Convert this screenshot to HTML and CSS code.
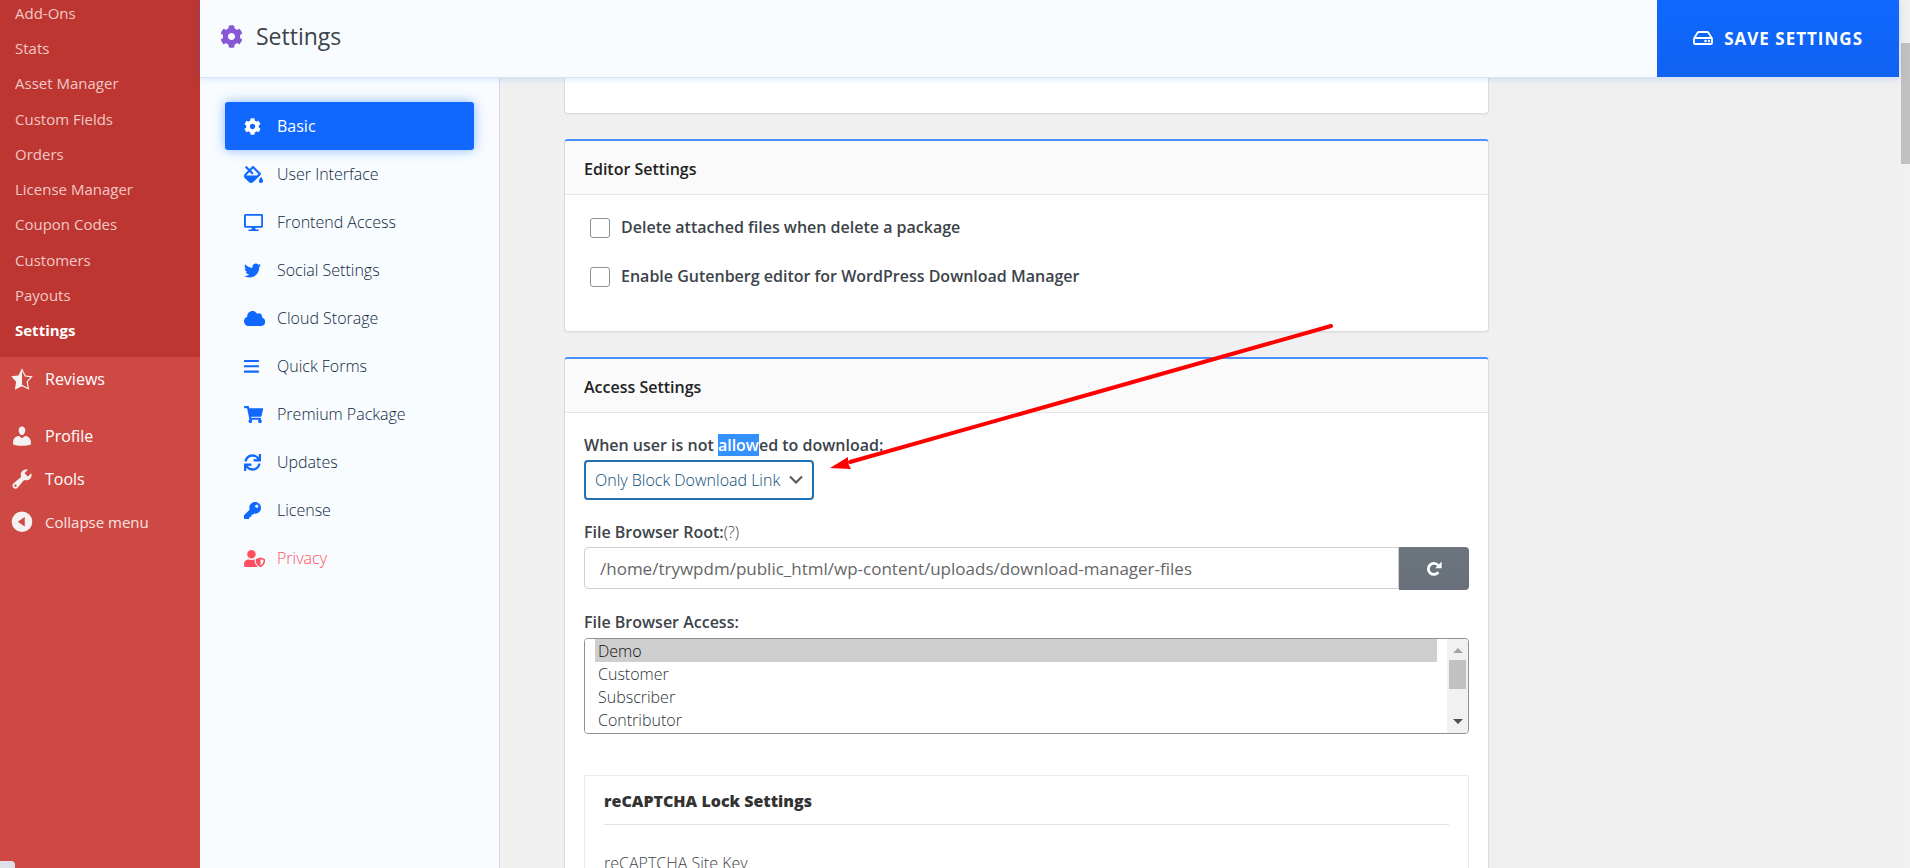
FILE: index.html
```html
<!DOCTYPE html>
<html lang="en">
<head>
  <meta charset="UTF-8" />
  <meta name="viewport" content="width=device-width, initial-scale=1.0"/>
  <title>Settings - Download Manager</title>
  <link rel="stylesheet" href="styles.css">
</head>
<body>

  <nav class="admin-menu">
    <ul class="submenu">
      <li><a href="#">Add-Ons</a></li>
      <li><a href="#">Stats</a></li>
      <li><a href="#">Asset Manager</a></li>
      <li><a href="#">Custom Fields</a></li>
      <li><a href="#">Orders</a></li>
      <li><a href="#">License Manager</a></li>
      <li><a href="#">Coupon Codes</a></li>
      <li><a href="#">Customers</a></li>
      <li><a href="#">Payouts</a></li>
      <li><a href="#" class="current">Settings</a></li>
    </ul>
    <ul class="top-menu">
      <li class="group-end"><a href="#">
        <svg class="dashicon" viewBox="0 0 20 20"><path d="M10 1L7 7l-6 .75 4.13 4.62L4 19l6-3 6 3-1.13-6.63L19 7.75 13 7zm0 2.24l2.34 4.69 4.65.58-3.18 3.56.87 5.15L10 14.88V3.24z"/></svg>
        Reviews</a></li>
      <li><a href="#">
        <svg class="dashicon" viewBox="0 0 20 20"><path d="M10 9.25c-2.27 0-2.73-3.44-2.73-3.44C7 4.02 7.82 2 9.97 2c2.16 0 2.98 2.02 2.71 3.81 0 0-.41 3.44-2.68 3.44zM10 11.800L12.500 10c2.600 0 4.900 2.300 4.900 4.600v2.400s-3.650 1.130-7.400 1.130c-3.750 0-7.400-1.130-7.400-1.130v-2.400C2.600 12.300 4.900 10 7.500 10z"/></svg>
        Profile</a></li>
      <li><a href="#">
        <svg class="dashicon" viewBox="0 0 20 20"><path d="M16.68 9.77c-1.34 1.34-3.3 1.67-4.95.99l-5.41 6.52c-.99.99-2.59.99-3.58 0s-.99-2.59 0-3.57l6.52-5.42c-.68-1.65-.35-3.61.99-4.95 1.28-1.28 3.12-1.62 4.72-1.06l-2.89 2.89 2.82 2.82 2.86-2.87c.53 1.58.18 3.39-1.08 4.65zM3.81 16.21c.4.39 1.04.39 1.43 0 .4-.4.4-1.04 0-1.43-.39-.4-1.03-.4-1.43 0-.39.39-.39 1.03 0 1.43z"/></svg>
        Tools</a></li>
    </ul>
    <button class="collapse" type="button">
      <svg class="dashicon" viewBox="0 0 20 20"><path fill-rule="evenodd" d="M10 1.200a8.600 8.600 0 1 1 0 17.200a8.600 8.600 0 1 1 0-17.200zM12.300 5.800L6.500 9.800l5.800 4z"/></svg>
      Collapse menu
    </button>
    <div class="status-chip"></div>
  </nav>

  <div class="main">
    <header class="header">
      <h1>
        <svg class="cog" viewBox="0 0 512 512"><path d="M487.400 315.700l-42.600-24.600c4.300-23.200 4.300-47 0-70.200l42.600-24.600c4.900-2.800 7.100-8.600 5.500-14-11.100-35.600-30-67.800-54.700-94.600-3.800-4.100-10-5.100-14.800-2.300L380.800 110c-17.900-15.400-38.500-27.300-60.800-35.100V25.800c0-5.600-3.900-10.500-9.400-11.700-36.700-8.200-74.300-7.800-109.200 0-5.500 1.200-9.400 6.100-9.400 11.700V75c-22.200 7.900-42.800 19.800-60.800 35.100L88.700 85.500c-4.900-2.800-11-1.900-14.800 2.300-24.700 26.700-43.600 58.900-54.700 94.600-1.700 5.400.6 11.200 5.500 14L67.300 221c-4.300 23.200-4.300 47 0 70.200l-42.600 24.600c-4.900 2.800-7.100 8.600-5.500 14 11.100 35.600 30 67.800 54.700 94.600 3.800 4.100 10 5.100 14.800 2.300l42.600-24.600c17.900 15.400 38.500 27.300 60.800 35.100v49.200c0 5.600 3.900 10.500 9.400 11.700 36.700 8.200 74.300 7.800 109.200 0 5.500-1.200 9.400-6.100 9.400-11.700v-49.200c22.200-7.900 42.800-19.800 60.800-35.100l42.600 24.600c4.900 2.800 11 1.900 14.800-2.300 24.700-26.700 43.600-58.900 54.700-94.600 1.500-5.500-.7-11.300-5.600-14.100zM256 336c-44.100 0-80-35.900-80-80s35.900-80 80-80 80 35.900 80 80-35.900 80-80 80z"/></svg>
        Settings
      </h1>
      <button class="save" type="submit" form="wpdm-settings">
        <svg viewBox="0 0 20 14"><path d="M1 7.500L4.500 1.800Q5 1 6 1h8q1 0 1.500.8L19 7.500V12q0 1-1 1H2q-1 0-1-1V8q0-1 1-1h16q1 0 1 1" fill="none" stroke="currentColor" stroke-width="1.800"/><circle cx="12.500" cy="10" r="1.300"/><circle cx="16" cy="10" r="1.300"/></svg>
        SAVE SETTINGS
      </button>
    </header>

    <div class="columns">
      <ul class="tabs">
        <li><a href="#" class="active"><svg viewBox="0 0 512 512"><path d="M487.400 315.700l-42.600-24.600c4.300-23.200 4.300-47 0-70.200l42.600-24.600c4.900-2.800 7.100-8.600 5.500-14-11.100-35.600-30-67.800-54.700-94.600-3.800-4.100-10-5.100-14.800-2.300L380.800 110c-17.900-15.400-38.500-27.300-60.800-35.100V25.800c0-5.600-3.900-10.500-9.400-11.700-36.700-8.200-74.300-7.800-109.200 0-5.500 1.200-9.400 6.100-9.400 11.700V75c-22.200 7.900-42.800 19.800-60.800 35.100L88.700 85.500c-4.900-2.800-11-1.900-14.800 2.300-24.700 26.700-43.600 58.900-54.700 94.600-1.700 5.400.6 11.200 5.500 14L67.300 221c-4.300 23.200-4.300 47 0 70.200l-42.600 24.600c-4.900 2.800-7.100 8.600-5.500 14 11.100 35.600 30 67.800 54.700 94.600 3.800 4.100 10 5.100 14.800 2.300l42.600-24.600c17.900 15.400 38.500 27.300 60.800 35.100v49.200c0 5.600 3.900 10.500 9.400 11.700 36.700 8.200 74.300 7.800 109.200 0 5.500-1.200 9.400-6.100 9.400-11.700v-49.200c22.200-7.900 42.800-19.800 60.800-35.100l42.600 24.600c4.900 2.800 11 1.900 14.800-2.300 24.700-26.700 43.600-58.900 54.700-94.600 1.500-5.500-.7-11.300-5.600-14.100zM256 336c-44.100 0-80-35.900-80-80s35.900-80 80-80 80 35.900 80 80-35.900 80-80 80z"/></svg>Basic</a></li>
        <li><a href="#"><svg viewBox="0 0 576 512"><path d="M512 320s-64 92.650-64 128c0 35.350 28.660 64 64 64s64-28.650 64-64-64-128-64-128zm-9.370-102.940L294.940 9.370C288.690 3.120 280.500 0 272.310 0s-16.380 3.120-22.620 9.370l-81.580 81.580L81.930 4.760c-6.250-6.250-16.380-6.250-22.620 0L36.690 27.380c-6.240 6.250-6.240 16.380 0 22.620l86.190 86.180-94.760 94.760c-37.490 37.480-37.490 98.260 0 135.750l117.190 117.190c18.740 18.740 43.310 28.120 67.870 28.120 24.570 0 49.130-9.370 67.870-28.120l221.570-221.570c12.500-12.500 12.500-32.750.01-45.250zm-116.220 70.970H65.930c1.360-3.840 3.570-7.980 7.430-11.830l13.150-13.150 81.610-81.610 58.600 58.600c12.490 12.490 32.750 12.490 45.240 0s12.490-32.750 0-45.240l-58.600-58.600 58.950-58.950 162.440 162.440-48.340 48.340z"/></svg>User Interface</a></li>
        <li><a href="#"><svg viewBox="0 0 576 512"><path d="M528 0H48C21.500 0 0 21.500 0 48v320c0 26.500 21.500 48 48 48h192l-16 48h-72c-13.300 0-24 10.700-24 24s10.700 24 24 24h272c13.300 0 24-10.700 24-24s-10.700-24-24-24h-72l-16-48h192c26.500 0 48-21.500 48-48V48c0-26.500-21.500-48-48-48zm-10 362H58V54h460v308z"/></svg>Frontend Access</a></li>
        <li><a href="#"><svg viewBox="0 0 512 512"><path d="M459.370 151.716c.325 4.548.325 9.097.325 13.645 0 138.720-105.583 298.558-298.558 298.558-59.452 0-114.680-17.219-161.137-47.106 8.447.974 16.568 1.299 25.340 1.299 49.055 0 94.213-16.568 130.274-44.832-46.132-.975-84.792-31.188-98.112-72.772 6.498.974 12.995 1.624 19.818 1.624 9.421 0 18.843-1.300 27.614-3.573-48.081-9.747-84.143-51.980-84.143-102.985v-1.299c13.969 7.797 30.214 12.670 47.431 13.319-28.264-18.843-46.781-51.005-46.781-87.391 0-19.492 5.197-37.360 14.294-52.954 51.655 63.675 129.300 105.258 216.365 109.807-1.624-7.797-2.599-15.918-2.599-24.040 0-57.828 46.782-104.934 104.934-104.934 30.213 0 57.502 12.670 76.670 33.137 23.715-4.548 46.456-13.320 66.599-25.340-7.798 24.366-24.366 44.833-46.132 57.827 21.117-2.273 41.584-8.122 60.426-16.243-14.292 20.791-32.161 39.308-52.628 54.253z"/></svg>Social Settings</a></li>
        <li><a href="#"><svg viewBox="0 0 640 512"><path d="M537.600 226.600c4.100-10.700 6.400-22.400 6.400-34.600 0-53-43-96-96-96-19.700 0-38.100 6-53.300 16.200C367 64.200 315.300 32 256 32c-88.400 0-160 71.600-160 160 0 2.700.1 5.400.2 8.100C40.200 219.800 0 273.200 0 336c0 79.500 64.500 144 144 144h368c70.700 0 128-57.300 128-128 0-61.900-44-113.600-102.400-125.400z"/></svg>Cloud Storage</a></li>
        <li><a href="#"><svg viewBox="0 0 448 512"><path d="M0 68q0-10 10-10h428q10 0 10 10v44q0 10-10 10H10q-10 0-10-10zM0 228q0-10 10-10h428q10 0 10 10v44q0 10-10 10H10q-10 0-10-10zM0 388q0-10 10-10h428q10 0 10 10v44q0 10-10 10H10q-10 0-10-10z"/></svg>Quick Forms</a></li>
        <li><a href="#"><svg viewBox="0 0 576 512"><path d="M528.120 301.319l47.273-208C578.806 78.301 567.391 64 551.990 64H159.208l-9.166-44.810C147.758 8.021 137.930 0 126.529 0H24C10.745 0 0 10.745 0 24v16c0 13.255 10.745 24 24 24h69.883l70.248 343.435C147.325 417.100 136 435.222 136 456c0 30.928 25.072 56 56 56s56-25.072 56-56c0-15.674-6.447-29.835-16.824-40h209.647C430.447 426.165 424 440.326 424 456c0 30.928 25.072 56 56 56s56-25.072 56-56c0-22.172-12.888-41.332-31.579-50.405l5.517-24.276c3.413-15.018-8.002-29.319-23.403-29.319H218.117l-6.545-32h293.145c11.206 0 20.920-7.754 23.403-18.681z"/></svg>Premium Package</a></li>
        <li><a href="#"><svg viewBox="0 0 512 512"><path d="M440.650 12.570l4 82.770A247.160 247.160 0 0 0 255.830 8C134.730 8 33.910 94.920 12.290 209.820A12 12 0 0 0 24.090 224h49.050a12 12 0 0 0 11.670-9.260 175.910 175.910 0 0 1 317-56.940l-101.460-4.860a12 12 0 0 0-12.570 12v47.410a12 12 0 0 0 12 12H500a12 12 0 0 0 12-12V12a12 12 0 0 0-12-12h-47.370a12 12 0 0 0-11.980 12.570zM255.830 432a175.610 175.610 0 0 1-146-77.800l101.800 4.870a12 12 0 0 0 12.570-12v-47.400a12 12 0 0 0-12-12H12a12 12 0 0 0-12 12V500a12 12 0 0 0 12 12h47.350a12 12 0 0 0 12-12.600l-4.150-82.570A247.170 247.170 0 0 0 255.830 504c121.110 0 221.930-86.920 243.550-201.820a12 12 0 0 0-11.800-14.180h-49.050a12 12 0 0 0-11.670 9.260A175.860 175.860 0 0 1 255.830 432z"/></svg>Updates</a></li>
        <li><a href="#"><svg viewBox="0 0 512 512"><path d="M512 176.001C512 273.203 433.202 352 336 352c-11.220 0-22.190-1.062-32.827-3.069l-24.012 27.014A23.999 23.999 0 0 1 261.223 384H224v40c0 13.255-10.745 24-24 24h-40v40c0 13.255-10.745 24-24 24H24c-13.255 0-24-10.745-24-24v-78.059c0-6.365 2.529-12.470 7.029-16.971l161.802-161.802C163.108 213.814 160 195.271 160 176 160 78.798 238.797.001 335.999 0 433.488-.001 512 78.511 512 176.001zM336 128c0 26.510 21.490 48 48 48s48-21.490 48-48-21.490-48-48-48-48 21.490-48 48z"/></svg>License</a></li>
        <li><a href="#" class="danger"><svg viewBox="0 0 640 512"><path d="M622.300 271.100l-115.200-45c-4.100-1.600-12.600-3.700-22.200 0l-115.200 45c-10.700 4.200-17.700 14-17.700 24.900 0 111.600 68.700 188.800 132.900 213.900 9.600 3.700 18 1.600 22.200 0C558.400 489.900 640 420.500 640 296c0-10.900-7-20.700-17.700-24.900zM496 462.400V273.300l95.500 37.300c-5.600 87.100-60.900 135.400-95.500 151.800zM224 256c70.700 0 128-57.300 128-128S294.700 0 224 0 96 57.300 96 128s57.300 128 128 128zm96 40c0-2.500.8-4.800 1.100-7.200-2.500-.1-4.900-.8-7.500-.8h-16.700c-22.200 10.200-46.900 16-72.900 16s-50.600-5.800-72.900-16h-16.700C60.200 288 0 348.200 0 422.400V464c0 26.500 21.500 48 48 48h352c6.800 0 13.300-1.500 19.200-4-54-42.900-99.200-116.700-99.200-212z"/></svg>Privacy</a></li>
      </ul>

      <form class="content" id="wpdm-settings">
        <section class="panel panel-scrolled"></section>

        <section class="panel">
          <h2 class="panel-heading">Editor Settings</h2>
          <div class="panel-body checks">
            <label class="check"><input type="checkbox">Delete attached files when delete a package</label>
            <label class="check"><input type="checkbox">Enable Gutenberg editor for WordPress Download Manager</label>
          </div>
        </section>

        <section class="panel">
          <h2 class="panel-heading">Access Settings</h2>
          <div class="panel-body">
            <div class="form-group">
              <label for="restrict">When user is not <span class="selected">allow</span>ed to download:</label>
              <select class="dropdown" id="restrict">
                <option>Only Block Download Link</option>
                <option>Hide Everything</option>
              </select>
            </div>

            <div class="form-group">
              <div><label for="root">File Browser Root:</label><span class="help" title="Root dir for server file browser">(?)</span></div>
              <div class="input-group">
                <input type="text" id="root" value="/home/trywpdm/public_html/wp-content/uploads/download-manager-files">
                <button type="button" aria-label="Reset">
                  <svg viewBox="0 0 16 16"><path d="M12.300 11.200A5.500 5.500 0 1 1 12 4.300" fill="none" stroke="currentColor" stroke-width="2.800"/><path d="M15.600.6v6.100q0 .6-.6.6H9.200z"/></svg>
                </button>
              </div>
            </div>

            <div class="form-group">
              <label for="access">File Browser Access:</label>
              <div class="listbox">
                <select id="access" multiple size="4">
                  <option selected>Demo</option>
                  <option>Customer</option>
                  <option>Subscriber</option>
                  <option>Contributor</option>
                  <option>Author</option>
                  <option>Editor</option>
                  <option>Administrator</option>
                </select>
                <div class="list-scroll">
                  <span class="arrow-up"></span>
                  <span class="list-thumb"></span>
                  <span class="arrow-down"></span>
                </div>
              </div>
            </div>

            <fieldset class="recaptcha">
              <h3>reCAPTCHA Lock Settings</h3>
              <label for="sitekey">reCAPTCHA Site Key</label>
              <input type="text" id="sitekey">
            </fieldset>
          </div>
        </section>

        <!-- pointer to the dropdown -->
        <svg class="pointer" viewBox="0 0 504 146"><path d="M20 138L501 2" stroke="#f00" stroke-width="4" stroke-linecap="round"/><path d="M0 144L18 133V139L21 145z" fill="#f00"/></svg>
      </form>
    </div>
  </div>

  <div class="page-scroll"><div class="page-thumb"></div></div>

</body>
</html>
```
FILE: styles.css
```css
* { box-sizing: border-box; margin: 0; padding: 0; }
body {
  display: flex;
  height: 100vh;
  overflow: hidden;
  font-family: "Open Sans", "Noto Sans", sans-serif;
  font-size: 16px;
  background: #f0f0f0;
  color: #3c434a;
}
ul { list-style: none; }
a { text-decoration: none; }
svg { fill: currentColor; flex-shrink: 0; }
button, input, select { font-family: inherit; font-size: 16px; }

/* admin menu */
.admin-menu {
  position: relative;
  width: 200px;
  flex-shrink: 0;
  background: #cf4944;
}
.submenu {
  display: grid;
  grid-auto-rows: 1fr;
  height: 362px;
  margin-top: -5px;
  padding-bottom: 9px;
  background: #be3631;
}
.submenu a {
  display: flex;
  align-items: center;
  height: 100%;
  padding-left: 15px;
  font-size: 15px;
  color: #f1c8c7;
}
.submenu a.current { color: #fff; font-weight: 700; }

.top-menu a, .collapse {
  display: flex;
  align-items: center;
  gap: 11px;
  height: 43px;
  padding-left: 10px;
  color: #fff;
}
.group-end { margin-bottom: 14px; }
.dashicon { width: 24px; height: 24px; color: #f3f1f1; }
.collapse {
  background: none;
  border: 0;
  font-size: 15px;
  color: #f7e3e3;
  cursor: pointer;
}
.status-chip {
  position: absolute;
  left: 0;
  bottom: 0;
  width: 15px;
  height: 7px;
  background: #dee1e6;
  border-top-right-radius: 4px;
}

/* header */
.main {
  display: flex;
  flex-direction: column;
  flex: 1;
  min-width: 0;
}
.header {
  position: relative;
  z-index: 2;
  display: flex;
  justify-content: space-between;
  height: 78px;
  flex-shrink: 0;
  background: #f8fcff;
  border-bottom: 1px solid #d9e4f2;
  box-shadow: 0 0 8px #1068ff33;
}
.header h1 {
  display: flex;
  align-items: center;
  gap: 13px;
  padding: 0 0 5px 20px;
  font-size: 23px;
  font-weight: 500;
}
.cog { width: 23px; height: 23px; color: #8757d5; }
.save {
  display: flex;
  align-items: center;
  gap: 11px;
  padding: 0 36px 1px;
  border: 0;
  background: linear-gradient(#0f68ff, #1062f2);
  color: #fff;
  font-size: 17px;
  font-weight: 700;
  letter-spacing: 1px;
  cursor: pointer;
}
.save svg { width: 20px; height: 14px; }

/* tabs */
.columns {
  display: flex;
  flex: 1;
  min-height: 0;
}
.tabs {
  width: 300px;
  flex-shrink: 0;
  padding: 24px 25px;
  background: #f8fcff;
  border-right: 1px solid #d3dbe8;
  display: grid;
  grid-auto-rows: 48px;
  align-content: start;
}
.tabs a {
  display: grid;
  grid-template-columns: 33px 1fr;
  align-items: center;
  height: 48px;
  padding-left: 19px;
  border-radius: 3px;
  font-weight: 300;
  color: #10283f;
}
.tabs svg { height: 17px; color: #1068ff; }
.tabs a.active {
  background: #1068ff;
  color: #fff;
  font-weight: 400;
  box-shadow: 0 0 12px #1068ff77;
}
.tabs a.active svg { color: #fff; }
.tabs a.danger, .tabs a.danger svg { color: #ff5062; }

/* content */
.content {
  position: relative;
  flex: 1;
  min-width: 0;
  padding-left: 64px;
  overflow: hidden;
}
.panel {
  max-width: 925px;
  margin-bottom: 25px;
  background: #fff;
  border: 1px solid #dcdcdc;
  border-top: 2px solid #4a90ff;
  border-radius: 4px;
  box-shadow: 0 1px 2px #0000000d;
}
.panel-scrolled {
  height: 36px;
  border-top: 0;
  border-radius: 0 0 4px 4px;
}
.panel-heading {
  padding: 16px 19px 13px;
  background: #fafafa;
  border-bottom: 1px solid #e3e4e5;
  border-radius: 3px 3px 0 0;
  font-size: 16px;
  line-height: 24px;
  font-weight: 600;
  color: #222;
}
.panel-body { padding: 20px 19px; }
.panel-body label { font-weight: 600; line-height: 24px; }

.checks {
  display: flex;
  flex-direction: column;
  gap: 25px;
  padding: 20px 25px 43px;
}
.check { display: flex; gap: 11px; }
.check input {
  appearance: none;
  width: 20px;
  height: 20px;
  margin-top: 3px;
  background: #fff;
  border: 1px solid #8c8f94;
  border-radius: 3px;
}

.form-group { margin-bottom: 20px; }
.form-group label { vertical-align: top; }
.selected { background: #3390ff; color: #fff; }
.dropdown {
  display: block;
  appearance: none;
  height: 40px;
  margin-top: 3px;
  padding: 0 31px 0 9px;
  border: 2px solid #2271b1;
  border-radius: 4px;
  background: #fff url("data:image/svg+xml,%3Csvg xmlns='http://www.w3.org/2000/svg' viewBox='0 0 14 10'%3E%3Cpath d='M1 1.500l6 6 6-6' fill='none' stroke='%23555' stroke-width='2'/%3E%3C/svg%3E") no-repeat right 9px center / 14px 10px;
  font-weight: 300;
  color: #0a4b78;
}
.help { line-height: 24px; font-weight: 300; }

.input-group { display: flex; margin-top: 3px; }
.input-group input {
  flex: 1;
  min-width: 0;
  height: 42px;
  padding: 0 15px;
  border: 1px solid #cdcfd2;
  border-radius: 4px 0 0 4px;
  font-size: 17px;
  color: #666;
}
.input-group button {
  display: flex;
  align-items: center;
  justify-content: center;
  width: 70px;
  height: 43px;
  border: 0;
  border-radius: 0 4px 4px 0;
  background: linear-gradient(#6c757d, #686f7a);
  color: #fff;
}
.input-group button svg { width: 16px; height: 16px; }

.listbox {
  display: flex;
  margin-top: 4px;
  height: 96px;
  border: 1px solid #8c8f94;
  border-radius: 4px;
  overflow: hidden;
}
.listbox select {
  flex: 1;
  min-width: 0;
  padding: 0 10px;
  border: 0;
  scrollbar-width: none;
  color: #2c3338;
}
.listbox option {
  height: 23px;
  padding: 1px 3px 0;
  font-weight: 300;
  line-height: 23px;
}
.list-scroll {
  display: flex;
  flex-direction: column;
  align-items: center;
  width: 21px;
  padding: 9px 0;
  background: #f1f1f1;
}
.arrow-up {
  border: 5px solid transparent;
  border-top: 0;
  border-bottom-color: #a3a3a3;
}
.list-thumb {
  width: 17px;
  height: 29px;
  margin: 7px 0 auto;
  background: #c1c1c1;
}
.arrow-down {
  border: 5px solid transparent;
  border-bottom: 0;
  border-top-color: #505050;
}

.recaptcha {
  margin-top: 41px;
  padding: 13px 19px;
  border: 1px solid #ececec;
}
.recaptcha h3 {
  margin-bottom: 26px;
  padding-bottom: 11px;
  border-bottom: 1px solid #e2e2e2;
  font-size: 16px;
  line-height: 24px;
  font-weight: 800;
  color: #333;
}
.recaptcha label { display: block; font-weight: 300; }
.recaptcha input {
  width: 100%;
  height: 42px;
  border: 1px solid #cdcfd2;
  border-radius: 4px;
}

.pointer {
  position: absolute;
  left: 330px;
  top: 246px;
  width: 504px;
  height: 146px;
}

/* page scrollbar */
.page-scroll {
  width: 11px;
  flex-shrink: 0;
  padding: 43px 0 0 2px;
  background: #f1f1f1;
}
.page-thumb { height: 121px; background: #c1c1c1; }
```
